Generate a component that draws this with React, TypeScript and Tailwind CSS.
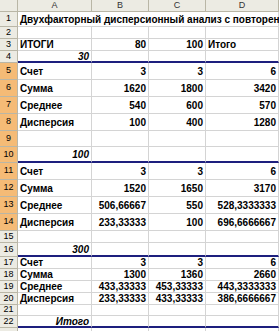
import React from "react";

type Cell = { t: string; r?: boolean; i?: boolean } | null;
type Row = { n: number; h: number; cells: Cell[]; blue?: boolean; sel?: boolean; spill?: boolean; noLabel?: boolean };

const L = (t: string): Cell => ({ t });
const R = (t: string): Cell => ({ t, r: true });
const RI = (t: string): Cell => ({ t, r: true, i: true });

const rows: Row[] = [
  { n: 1, h: 15, spill: true, cells: [L("Двухфакторный дисперсионный анализ с повторениями")] },
  { n: 2, h: 12, cells: [] },
  { n: 3, h: 12, cells: [L("ИТОГИ"), R("80"), R("100"), L("Итого")] },
  { n: 4, h: 12, blue: true, cells: [RI("30")] },
  { n: 5, h: 17, sel: true, cells: [L("Счет"), R("3"), R("3"), R("6")] },
  { n: 6, h: 17, sel: true, cells: [L("Сумма"), R("1620"), R("1800"), R("3420")] },
  { n: 7, h: 17, sel: true, cells: [L("Среднее"), R("540"), R("600"), R("570")] },
  { n: 8, h: 17, sel: true, cells: [L("Дисперсия"), R("100"), R("400"), R("1280")] },
  { n: 9, h: 16, sel: true, cells: [] },
  { n: 10, h: 16, sel: true, blue: true, cells: [RI("100")] },
  { n: 11, h: 17, sel: true, cells: [L("Счет"), R("3"), R("3"), R("6")] },
  { n: 12, h: 17, sel: true, cells: [L("Сумма"), R("1520"), R("1650"), R("3170")] },
  { n: 13, h: 17, sel: true, cells: [L("Среднее"), R("506,66667"), R("550"), R("528,3333333")] },
  { n: 14, h: 17, sel: true, cells: [L("Дисперсия"), R("233,33333"), R("100"), R("696,6666667")] },
  { n: 15, h: 12, cells: [] },
  { n: 16, h: 14, blue: true, cells: [RI("300")] },
  { n: 17, h: 12, cells: [L("Счет"), R("3"), R("3"), R("6")] },
  { n: 18, h: 12, cells: [L("Сумма"), R("1300"), R("1360"), R("2660")] },
  { n: 19, h: 12, cells: [L("Среднее"), R("433,33333"), R("453,33333"), R("443,3333333")] },
  { n: 20, h: 12, cells: [L("Дисперсия"), R("233,33333"), R("433,33333"), R("386,6666667")] },
  { n: 21, h: 11, cells: [] },
  { n: 22, h: 12, blue: true, cells: [RI("Итого")] },
  { n: 23, h: 13, noLabel: true, cells: [] },
];

const colW = ["w-[74px]", "w-[57px]", "w-[57px]", "w-[73px]"];
const cols = ["A", "B", "C", "D"];

function SheetRow({ row }: { row: Row }) {
  return (
    <div className="flex" style={{ height: row.h }}>
      <div
        className={`w-[18px] shrink-0 flex items-center justify-center border-r border-b border-[#b9b6a6] text-[9px] text-black ${
          row.sel ? "bg-[#f5bb76]" : "bg-[#ecebe3]"
        }`}
      >
        {row.noLabel ? "" : row.n}
      </div>
      {cols.map((c, ci) => {
        const cell = row.cells[ci];
        const last = ci === cols.length - 1;
        const hideR = row.spill && !last;
        return (
          <div
            key={c}
            className={`${colW[ci]} shrink-0 relative flex items-center px-[2px] text-[10px] font-bold text-black whitespace-nowrap ${
              cell?.r ? "justify-end" : "justify-start"
            } ${hideR ? "" : "border-r border-[#d4d4d4]"} ${
              row.blue ? "border-b-2 border-b-[#1d1f7e]" : "border-b border-b-[#d4d4d4]"
            } ${row.spill && ci === 0 ? "z-10 overflow-visible" : "overflow-hidden"}`}
          >
            {cell && <span className={cell.i ? "italic" : ""}>{cell.t}</span>}
          </div>
        );
      })}
    </div>
  );
}

export default function App() {
  return (
    <div className="w-[279px] h-[331px] overflow-hidden bg-white" style={{ fontFamily: '"Liberation Sans", Arial, sans-serif' }}>
      {/* column headers */}
      <div className="flex h-[12px]">
        <div className="w-[18px] shrink-0 bg-[#ecebe3] border-r border-b border-[#b9b6a6]" />
        {cols.map((c, ci) => (
          <div
            key={c}
            className={`${colW[ci]} shrink-0 flex items-center justify-center bg-[#ecebe3] border-r border-b border-[#b9b6a6] text-[9px] text-[#333]`}
          >
            {c}
          </div>
        ))}
      </div>
      {rows.map((r) => (
        <SheetRow key={r.n} row={r} />
      ))}
    </div>
  );
}
